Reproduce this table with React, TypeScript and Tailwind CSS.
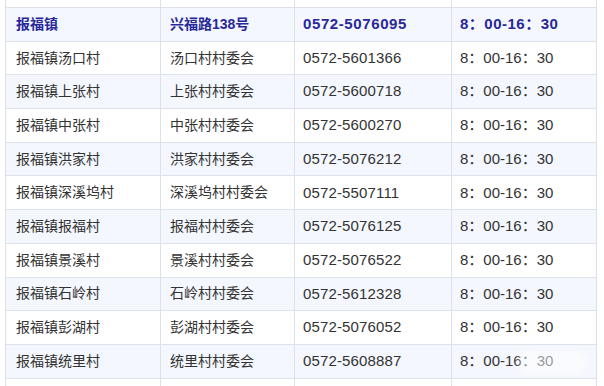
import React from "react";

const rows: [string, string, string, string][] = [
  ["报福镇", "兴福路138号", "0572-5076095", "8：00-16：30"],
  ["报福镇汤口村", "汤口村村委会", "0572-5601366", "8：00-16：30"],
  ["报福镇上张村", "上张村村委会", "0572-5600718", "8：00-16：30"],
  ["报福镇中张村", "中张村村委会", "0572-5600270", "8：00-16：30"],
  ["报福镇洪家村", "洪家村村委会", "0572-5076212", "8：00-16：30"],
  ["报福镇深溪坞村", "深溪坞村村委会", "0572-5507111", "8：00-16：30"],
  ["报福镇报福村", "报福村村委会", "0572-5076125", "8：00-16：30"],
  ["报福镇景溪村", "景溪村村委会", "0572-5076522", "8：00-16：30"],
  ["报福镇石岭村", "石岭村村委会", "0572-5612328", "8：00-16：30"],
  ["报福镇彭湖村", "彭湖村村委会", "0572-5076052", "8：00-16：30"],
  ["报福镇统里村", "统里村村委会", "0572-5608887", "8：00-16：30"],
];

const font = { fontFamily: '"Liberation Sans", "Noto Sans CJK SC", sans-serif' };

function Row({ cells, shaded, bold, h }: { cells: string[]; shaded: boolean; bold: boolean; h: string }) {
  const bg = shaded ? "bg-[#f4f7fd]" : "bg-white";
  const color = bold ? "text-[#28289a] font-bold" : "text-[#333333]";
  const track = bold ? "tracking-[0.6px]" : "tracking-[0.15px]";
  return (
    <div className={`grid grid-cols-[156px_134px_157px_145px] border-b border-[#dde2ea] ${bg} ${h}`}>
      <div className={`flex items-center border-l border-r border-[#dde2ea] pl-[10px] text-[14px] ${color}`}>{cells[0]}</div>
      <div className={`flex items-center border-r border-[#dde2ea] pl-[9px] text-[14px] ${color}`}>{cells[1]}</div>
      <div className={`flex items-center border-r border-[#dde2ea] pl-[8px] text-[15px] ${track} ${color}`}>{cells[2]}</div>
      <div className={`flex items-center border-r border-[#dde2ea] pl-[8px] text-[15px] ${bold ? "tracking-[0.5px]" : ""} ${color}`}>{cells[3]}</div>
    </div>
  );
}

export default function App() {
  return (
    <div className="relative w-[604px] h-[386px] overflow-hidden bg-white" style={font}>
      <div className="ml-[5px] w-[592px]">
        <Row cells={["", "", "", ""]} shaded={false} bold={false} h="h-[8px]" />
        {rows.map((r, i) => (
          <Row key={i} cells={r} shaded={i % 2 === 0} bold={i === 0} h="h-[33.7px]" />
        ))}
        <Row cells={["", "", "", ""]} shaded={false} bold={false} h="h-[33px]" />
      </div>
      <div className="absolute left-[518px] top-[350px] w-[70px] h-[24px] rounded-full bg-white/50 blur-[3px]" />
    </div>
  );
}
